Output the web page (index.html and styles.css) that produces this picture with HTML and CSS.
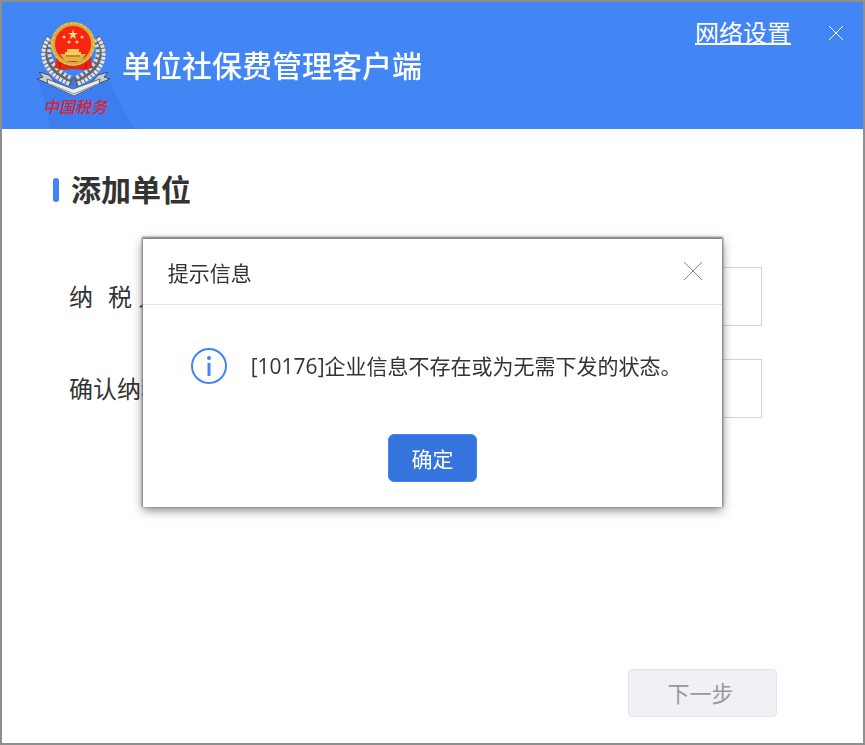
FILE: index.html
```html
<!DOCTYPE html>
<html lang="zh-CN">
<head>
    <meta charset="UTF-8">
    <meta name="viewport" content="width=device-width, initial-scale=1.0">
    <title>单位社保费管理客户端</title>
    <link rel="stylesheet" href="styles.css">
</head>
<body>
    <div class="window">
        <header class="header">
            <svg class="logo" viewBox="32 2 80 127" aria-hidden="true">
                <path fill="#3c7ef0" d="M39 80 L106 76 L134 129 L51 129 Z"/>
                <!-- wheat wreath -->
                <g fill="none">
                    <g stroke="#5d6673" stroke-width="9">
                        <path d="M51 38 C41 51 44 70 72 82"/>
                        <path d="M96 38 C106 51 103 70 75 82"/>
                    </g>
                    <g stroke="#dfe2e6" stroke-width="4" stroke-dasharray="3 1">
                        <path d="M49 38 C38 52 42 73 70 84"/>
                        <path d="M98 38 C109 52 105 73 77 84"/>
                    </g>
                    <g stroke="#d3d7dc" stroke-width="4" stroke-dasharray="3 2">
                        <path d="M53 40 C45 52 49 67 71 78"/>
                        <path d="M94 40 C102 52 98 67 76 78"/>
                    </g>
                </g>
                <!-- ribbon -->
                <path fill="#c9ccd0" stroke="#444c58" d="M39 72 L49 75 L55 82 L47 83 L37 79 L43 77 Z"/>
                <path fill="#c9ccd0" stroke="#444c58" d="M108 72 L98 75 L92 82 L100 83 L110 79 L104 77 Z"/>
                <path fill="#e9ebee" stroke="#596270" d="M47 79 L73 89 L100 79 L99 84 L74 96 L48 84 Z"/>
                <path fill="none" stroke="#8b9199" d="M50 84 L74 94 L97 84"/>
                <!-- national emblem -->
                <path fill="#e62612" d="M56 55 H91 L92 68 L84 70 L73 69 L63 70 L55 68 Z"/>
                <path fill="none" stroke="#a8150c" d="M60 62 V69 M86 62 V69"/>
                <circle cx="73" cy="44" r="20" fill="#fa2410" stroke="#d3ac3c" stroke-width="4"/>
                <circle cx="73" cy="44" r="21" fill="none" stroke="#f0d571" stroke-dasharray="3 2"/>
                <path fill="#d9b548" d="M60 54 H86 L81 61 H65 Z"/>
                <path fill="#f3cf57" d="M67 49 H79 V52 H81 V55 H65 V52 H67 Z"/>
                <path fill="none" stroke="#e23a18" d="M66 56 H80"/>
                <path fill="#ffe478" d="M73 29 L74 33 L78 33 L75 35 L76 39 L73 37 L70 39 L71 35 L68 33 L72 33 Z"/>
                <g fill="#ffd8a0">
                    <circle cx="64" cy="37" r="1.5"/>
                    <circle cx="82" cy="37" r="1.5"/>
                    <circle cx="69" cy="42" r="1.5"/>
                    <circle cx="77" cy="42" r="1.5"/>
                </g>
                <text class="logo-text" x="43" y="113">中国税务</text>
            </svg>
            <h1 class="app-name">单位社保费管理客户端</h1>
            <nav class="header-tools">
                <a class="settings-link" href="#">网络设置</a>
                <button class="icon-button window-close" type="button" aria-label="关闭">
                    <svg width="16" height="16" viewBox="0 0 16 16"><path d="M1 1 L15 15 M15 1 L1 15"/></svg>
                </button>
            </nav>
        </header>

        <main class="content">
            <h2 class="page-title">添加单位</h2>
            <form class="form">
                <div class="form-row">
                    <label class="form-label" for="taxId"><span class="spaced">纳</span>税 人识别号</label>
                    <input class="form-input" type="text" id="taxId">
                </div>
                <div class="form-row">
                    <label class="form-label" for="taxIdConfirm">确认纳税人识别号</label>
                    <input class="form-input" type="text" id="taxIdConfirm">
                </div>
            </form>
            <div class="actions">
                <button class="next-button" type="button" disabled>下一步</button>
            </div>
        </main>
    </div>

    <div class="overlay">
        <section class="dialog" role="alertdialog" aria-labelledby="dialogTitle" aria-describedby="dialogMessage">
            <div class="dialog-header">
                <h3 class="dialog-title" id="dialogTitle">提示信息</h3>
                <button class="icon-button dialog-close" type="button" aria-label="关闭">
                    <svg width="20" height="20" viewBox="0 0 20 20"><path d="M1 1 L19 19 M19 1 L1 19"/></svg>
                </button>
            </div>
            <div class="dialog-body">
                <svg class="info-icon" viewBox="0 0 36 36" aria-hidden="true">
                    <circle cx="18" cy="18" r="17" fill="none" stroke="#4285f4" stroke-width="2"/>
                    <circle cx="18" cy="10" r="2" fill="#4285f4"/>
                    <path d="M18 15 V28" stroke="#4285f4" stroke-width="3"/>
                </svg>
                <p class="message" id="dialogMessage">[10176]企业信息不存在或为无需下发的状态。</p>
            </div>
            <div class="dialog-footer">
                <button class="ok-button" type="button">确定</button>
            </div>
        </section>
    </div>
</body>
</html>
```
FILE: styles.css
```css
* {
    box-sizing: border-box;
}

body {
    margin: 0;
    font-family: "Open Sans", "Noto Sans CJK SC", sans-serif;
    color: #333;
}

h1, h2, h3, p {
    margin: 0;
}

button, input {
    font-family: inherit;
}

.window {
    display: flex;
    flex-direction: column;
    min-height: 100vh;
    border: 2px solid #8e8e8e;
    background: #fff;
}

/* header */
.header {
    display: flex;
    align-items: center;
    gap: 10px;
    padding: 0 17px 0 30px;
    background: #4285f4;
    color: #fff;
}

.logo {
    flex: none;
    width: 80px;
    height: 127px;
    overflow: visible;
}

.logo-text {
    fill: #e0202c;
    font-size: 16px;
    font-style: italic;
    font-weight: 500;
}

.app-name {
    font-size: 30px;
    font-weight: 500;
    line-height: 40px;
    z-index: 1;
}

.header-tools {
    display: flex;
    align-items: center;
    align-self: flex-start;
    gap: 35px;
    margin-left: auto;
    padding-top: 12px;
}

.settings-link {
    color: #fff;
    font-size: 24px;
    line-height: 38px;
    text-decoration-thickness: 2px;
    text-underline-offset: 1px;
}

.icon-button {
    display: flex;
    padding: 2px;
    border: 0;
    background: none;
    fill: none;
    cursor: pointer;
}

.window-close {
    stroke: #fff;
}

/* form */
.content {
    display: flex;
    flex: 1;
    flex-direction: column;
    padding: 40px 86px 26px 51px;
}

.page-title {
    display: flex;
    align-items: center;
    gap: 12px;
    font-size: 30px;
    font-weight: 700;
    line-height: 42px;
}

.page-title::before {
    content: "";
    width: 6px;
    height: 24px;
    border-radius: 3px;
    background: #4285f4;
}

.form {
    display: grid;
    gap: 33px;
    padding: 56px 15px 0 16px;
}

.form-row {
    display: flex;
    align-items: center;
    gap: 20px;
}

.form-label {
    flex: none;
    width: 219px;
    padding-bottom: 2px;
    font-size: 24px;
}

.spaced {
    margin-right: 15px;
}

.form-input {
    flex: 1;
    min-width: 0;
    height: 59px;
    padding: 0 12px;
    border: 1px solid #ccd3de;
    font-size: 24px;
}

.actions {
    margin-top: auto;
    text-align: right;
}

.next-button {
    width: 149px;
    height: 48px;
    padding: 0 4px 2px 0;
    border: 1px solid #e2e4e9;
    border-radius: 4px;
    background: #eff1f5;
    color: #999;
    font-size: 22px;
}

/* message dialog */
.overlay {
    position: fixed;
    inset: 0;
    display: grid;
    place-items: center;
}

.dialog {
    width: 67%;
    background: #fff;
    box-shadow: 0 -1px 2px 1px #777, 0 3px 10px rgba(0, 0, 0, 0.5);
}

.dialog-header {
    display: flex;
    align-items: center;
    justify-content: space-between;
    height: 66px;
    padding: 0 17px 0 25px;
    border-bottom: 1px solid #e2e4e8;
}

.dialog-title {
    padding-top: 4px;
    font-size: 21px;
    font-weight: 400;
    line-height: 32px;
}

.dialog-close {
    stroke: #888;
}

.dialog-body {
    display: flex;
    align-items: center;
    gap: 24px;
    padding: 43px 25px 0 48px;
}

.info-icon {
    flex: none;
    width: 36px;
    height: 36px;
}

.message {
    font-size: 21px;
    line-height: 36px;
}

.dialog-footer {
    padding: 50px 0 25px;
    text-align: center;
}

.ok-button {
    display: block;
    width: 89px;
    height: 48px;
    margin: 0 auto;
    border: 1px solid #4285f4;
    border-radius: 6px;
    background: #3574dd;
    color: #fff;
    font-size: 21px;
}
```
